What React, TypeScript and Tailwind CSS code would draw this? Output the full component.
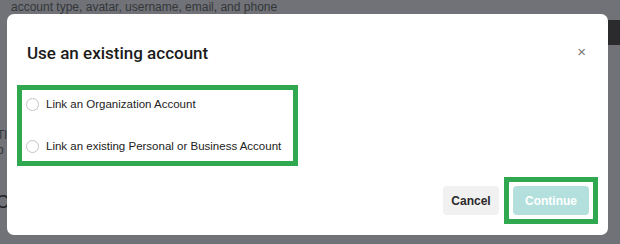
import React from 'react';

const arial = { fontFamily: '"Liberation Sans", Arial, sans-serif' };

function Radio({ label }: { label: string }) {
  return (
    <label className="flex items-center gap-[7px] text-[11.5px] text-[#222] leading-none whitespace-nowrap" style={arial}>
      <span className="w-[13px] h-[13px] rounded-full border border-[#c4c4c4] bg-white shrink-0" />
      <span>{label}</span>
    </label>
  );
}

export default function App() {
  return (
    <div className="relative w-[620px] h-[244px] overflow-hidden bg-[#707277] pt-[14px] pl-[7px]" style={arial}>
      {/* page behind the overlay */}
      <div className="absolute left-[11px] top-[-2px] text-[12px] text-[#34363a] whitespace-nowrap">
        account type, avatar, username, email, and phone
      </div>
      <div className="absolute left-[-3px] top-[128px] text-[12px] leading-[15px] text-[#34363a]">
        <div>Tl</div>
        <div>p</div>
      </div>
      <div className="absolute left-[-4px] top-[189px] text-[18px] text-[#1f2023]">C</div>
      <div className="absolute left-[608px] top-[20px] w-[12px] h-[25px] bg-[#2b2b2e]" />

      {/* modal */}
      <div className="relative w-[601px] h-[221px] bg-white rounded-[7px] flex flex-col">
        <div className="flex items-start justify-between pl-[20px] pr-[22px] pt-[28px]">
          <h2
            className="text-[17px] font-medium text-[#1b1b1b] leading-[22px]"
            style={{ fontFamily: 'Roboto, "Noto Sans", sans-serif' }}
          >
            Use an existing account
          </h2>
          <button className="text-[#777] text-[15px] leading-none mt-[2px]">×</button>
        </div>
        <div className="ml-[10px] mt-[21px] w-[281px] h-[81px] border-[5px] border-[#2fa84f] flex flex-col justify-center gap-[29px] pl-[4px]">
          <Radio label="Link an Organization Account" />
          <Radio label="Link an existing Personal or Business Account" />
        </div>
        <div className="flex items-center justify-end gap-[5px] pr-[10px] mt-[11px]">
          <button className="w-[56px] h-[29px] rounded-[4px] bg-[#f1f1f1] text-[12px] font-bold text-[#2a2a2a]">
            Cancel
          </button>
          <div className="border-[5px] border-[#2fa84f] p-[4px]">
            <button className="w-[76px] h-[29px] rounded-[4px] bg-[#b3dfdc] text-[12px] font-bold text-white">
              Continue
            </button>
          </div>
        </div>
      </div>
    </div>
  );
}
